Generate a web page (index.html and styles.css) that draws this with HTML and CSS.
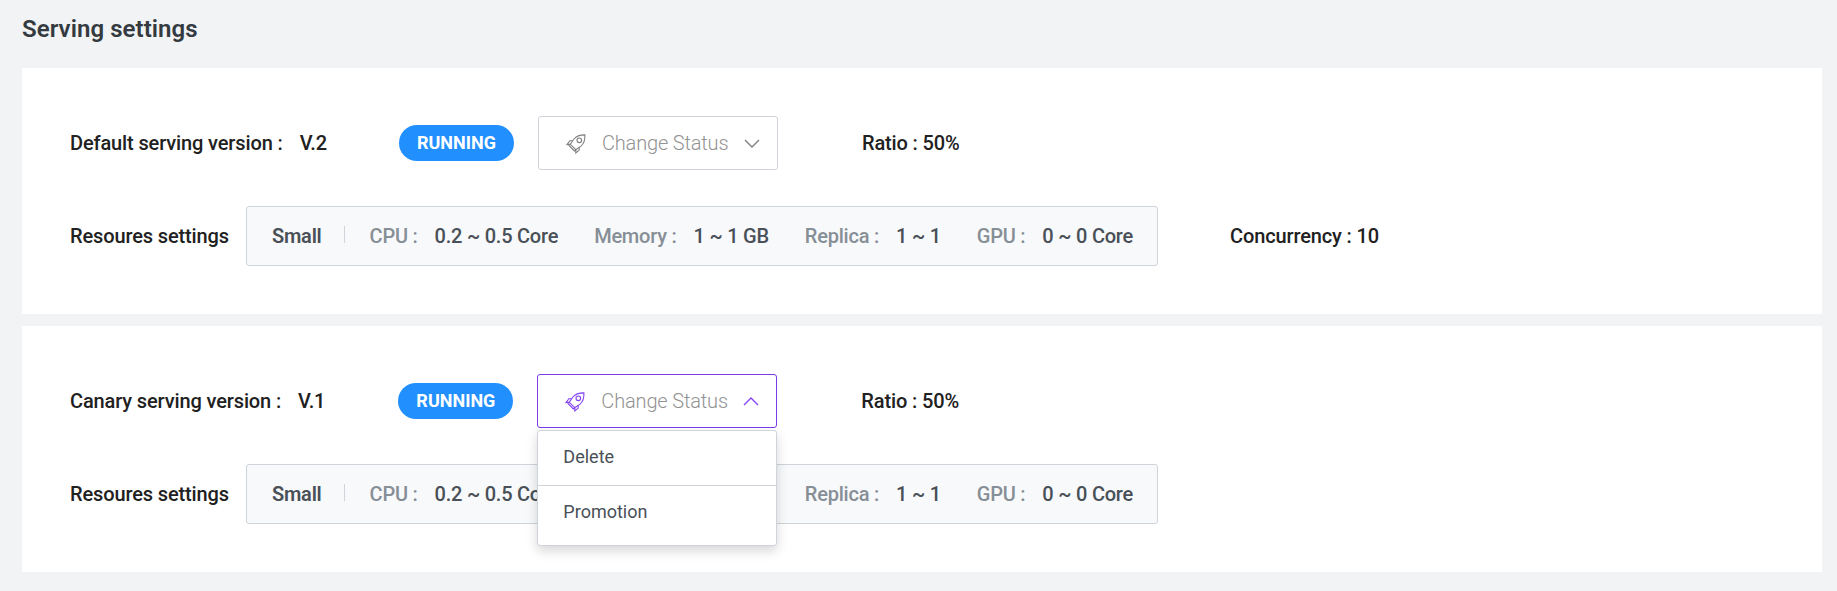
FILE: index.html
```html
<!DOCTYPE html>
<html lang="en">
<head>
<meta charset="utf-8">
<title>Serving settings</title>
<link rel="stylesheet" href="styles.css">
</head>
<body>
<svg class="sprite" width="0" height="0" aria-hidden="true">
  <symbol id="rocket" viewBox="0 0 20 20">
    <path d="M18.9.9C14 .8 10.500 2 7.900 5L4.300 10.300 9.800 15.700 15 12.100C18 9.500 19.200 5.800 18.900.9Z"/>
    <path d="M6.600 6.800 3.900 6.700 1 10.600 4.300 10.300M13.200 13.300 13.200 16.100 9.800 19 9.800 15.700M4.300 10.300 3 11.500 8.300 16.900 9.800 15.700"/>
    <circle cx="13.300" cy="6.300" r="2.300"/>
  </symbol>
  <symbol id="chevron" viewBox="0 0 16 9">
    <path d="M1 .9 8 7.900 15 .9"/>
  </symbol>
</svg>
<main class="page">
  <h1 class="title">Serving settings</h1>

  <section class="card">
    <div class="row row-version">
      <span class="label">Default serving version :</span>
      <span class="version">V.2</span>
      <span class="badge">RUNNING</span>
      <div class="select">
        <button class="select-button" type="button">
          <svg class="icon rocket"><use href="#rocket"/></svg>
          <span class="select-text">Change Status</span>
          <svg class="icon chevron"><use href="#chevron"/></svg>
        </button>
      </div>
      <span class="label">Ratio : 50%</span>
    </div>
    <div class="row row-resources">
      <span class="label resource-label">Resoures settings</span>
      <dl class="resources">
        <div class="size">Small</div>
        <div class="item"><dt>CPU :</dt><dd>0.2 ~ 0.5 Core</dd></div>
        <div class="item"><dt>Memory :</dt><dd>1 ~ 1 GB</dd></div>
        <div class="item"><dt>Replica :</dt><dd>1 ~ 1</dd></div>
        <div class="item"><dt>GPU :</dt><dd>0 ~ 0 Core</dd></div>
      </dl>
      <span class="label concurrency">Concurrency : 10</span>
    </div>
  </section>

  <section class="card">
    <div class="row row-version">
      <span class="label">Canary serving version :</span>
      <span class="version canary">V.1</span>
      <span class="badge">RUNNING</span>
      <div class="select open">
        <button class="select-button" type="button">
          <svg class="icon rocket"><use href="#rocket"/></svg>
          <span class="select-text">Change Status</span>
          <svg class="icon chevron"><use href="#chevron"/></svg>
        </button>
        <ul class="menu">
          <li class="menu-item">Delete</li>
          <li class="menu-item">Promotion</li>
        </ul>
      </div>
      <span class="label">Ratio : 50%</span>
    </div>
    <div class="row row-resources">
      <span class="label resource-label">Resoures settings</span>
      <dl class="resources">
        <div class="size">Small</div>
        <div class="item"><dt>CPU :</dt><dd>0.2 ~ 0.5 Core</dd></div>
        <div class="item"><dt>Memory :</dt><dd>1 ~ 1 GB</dd></div>
        <div class="item"><dt>Replica :</dt><dd>1 ~ 1</dd></div>
        <div class="item"><dt>GPU :</dt><dd>0 ~ 0 Core</dd></div>
      </dl>
    </div>
  </section>
</main>
</body>
</html>
```
FILE: styles.css
```css
* { box-sizing: border-box; }

body {
  margin: 0;
  background: #f1f3f5;
  color: #212121;
  font-family: Roboto, sans-serif;
  font-size: 20px;
  letter-spacing: -.13px;
  line-height: 24px;
  white-space: nowrap;
}

.sprite { position: absolute; }

.page {
  display: flex;
  flex-direction: column;
  gap: 12px;
  padding: 0 15px 0 22px;
}

.title {
  height: 56px;
  margin: 0;
  padding-top: 12px;
  color: #343a40;
  font-size: 24px;
  font-weight: 600;
  letter-spacing: .06px;
  line-height: 34px;
}

.card {
  display: flex;
  flex-direction: column;
  gap: 36px;
  height: 246px;
  padding: 48px;
  background: #fff;
}

.row { display: flex; align-items: center; }
.label, .version { font-weight: 500; }
.version { margin: 0 72px 0 17px; }
.canary { margin-right: 73px; }

.badge {
  width: 115px;
  height: 36px;
  margin-right: 24px;
  border-radius: 18px;
  background: #228fff;
  color: #fff;
  font-size: 18px;
  font-weight: 700;
  letter-spacing: 0;
  line-height: 36px;
  text-align: center;
}

.select {
  position: relative;
  width: 240px;
  margin-right: 84px;
}

.select-button {
  display: flex;
  align-items: center;
  width: 100%;
  height: 54px;
  padding: 0 17px 0 27px;
  border: 1px solid #ced4da;
  border-radius: 3px;
  background: #fff;
  color: #808080;
  font: 300 20px/24px Roboto, sans-serif;
  letter-spacing: -.16px;
}

.select-text { margin: 0 auto 0 16px; color: #929292; }
.icon { fill: none; stroke: currentColor; }
.rocket { width: 20px; height: 20px; stroke-width: 1.1; margin-top: 2px; }
.chevron { width: 16px; height: 9px; stroke-width: 1.4; }
.open .select-button { border-color: #7c3aed; color: #8443f6; }
.open .chevron { transform: rotate(180deg); }

.menu {
  position: absolute;
  top: 56px;
  left: 0;
  z-index: 1;
  width: 240px;
  height: 116px;
  margin: 0;
  padding: 0;
  border: 1px solid #ced4da;
  border-radius: 3px;
  background: #fff;
  box-shadow: 0 5px 12px rgba(0, 0, 0, .16);
  letter-spacing: 0;
  list-style: none;
}

.menu-item {
  height: 54px;
  padding-left: 25px;
  color: #495057;
  font-size: 18px;
  line-height: 52px;
}

.menu-item + .menu-item { height: 60px; border-top: 1px solid #ced4da; }

.resource-label { width: 176px; }

.resources {
  display: flex;
  align-items: center;
  gap: 36px;
  width: 912px;
  height: 60px;
  margin: 0 72px 0 0;
  padding: 0 25px;
  border: 1px solid #ced4da;
  border-radius: 3px;
  background: #f8f9fb;
  color: #495057;
  font-weight: 500;
  letter-spacing: -.23px;
}

.size {
  display: flex;
  margin-right: -11px;
  font-weight: 600;
}

.size::after {
  content: "";
  height: 17px;
  margin: 2px 0 0 22px;
  border-left: 1px solid #ced4da;
}

.item { display: flex; gap: 17px; }
dt { color: #868e96; }
dd { margin: 0; }
```
